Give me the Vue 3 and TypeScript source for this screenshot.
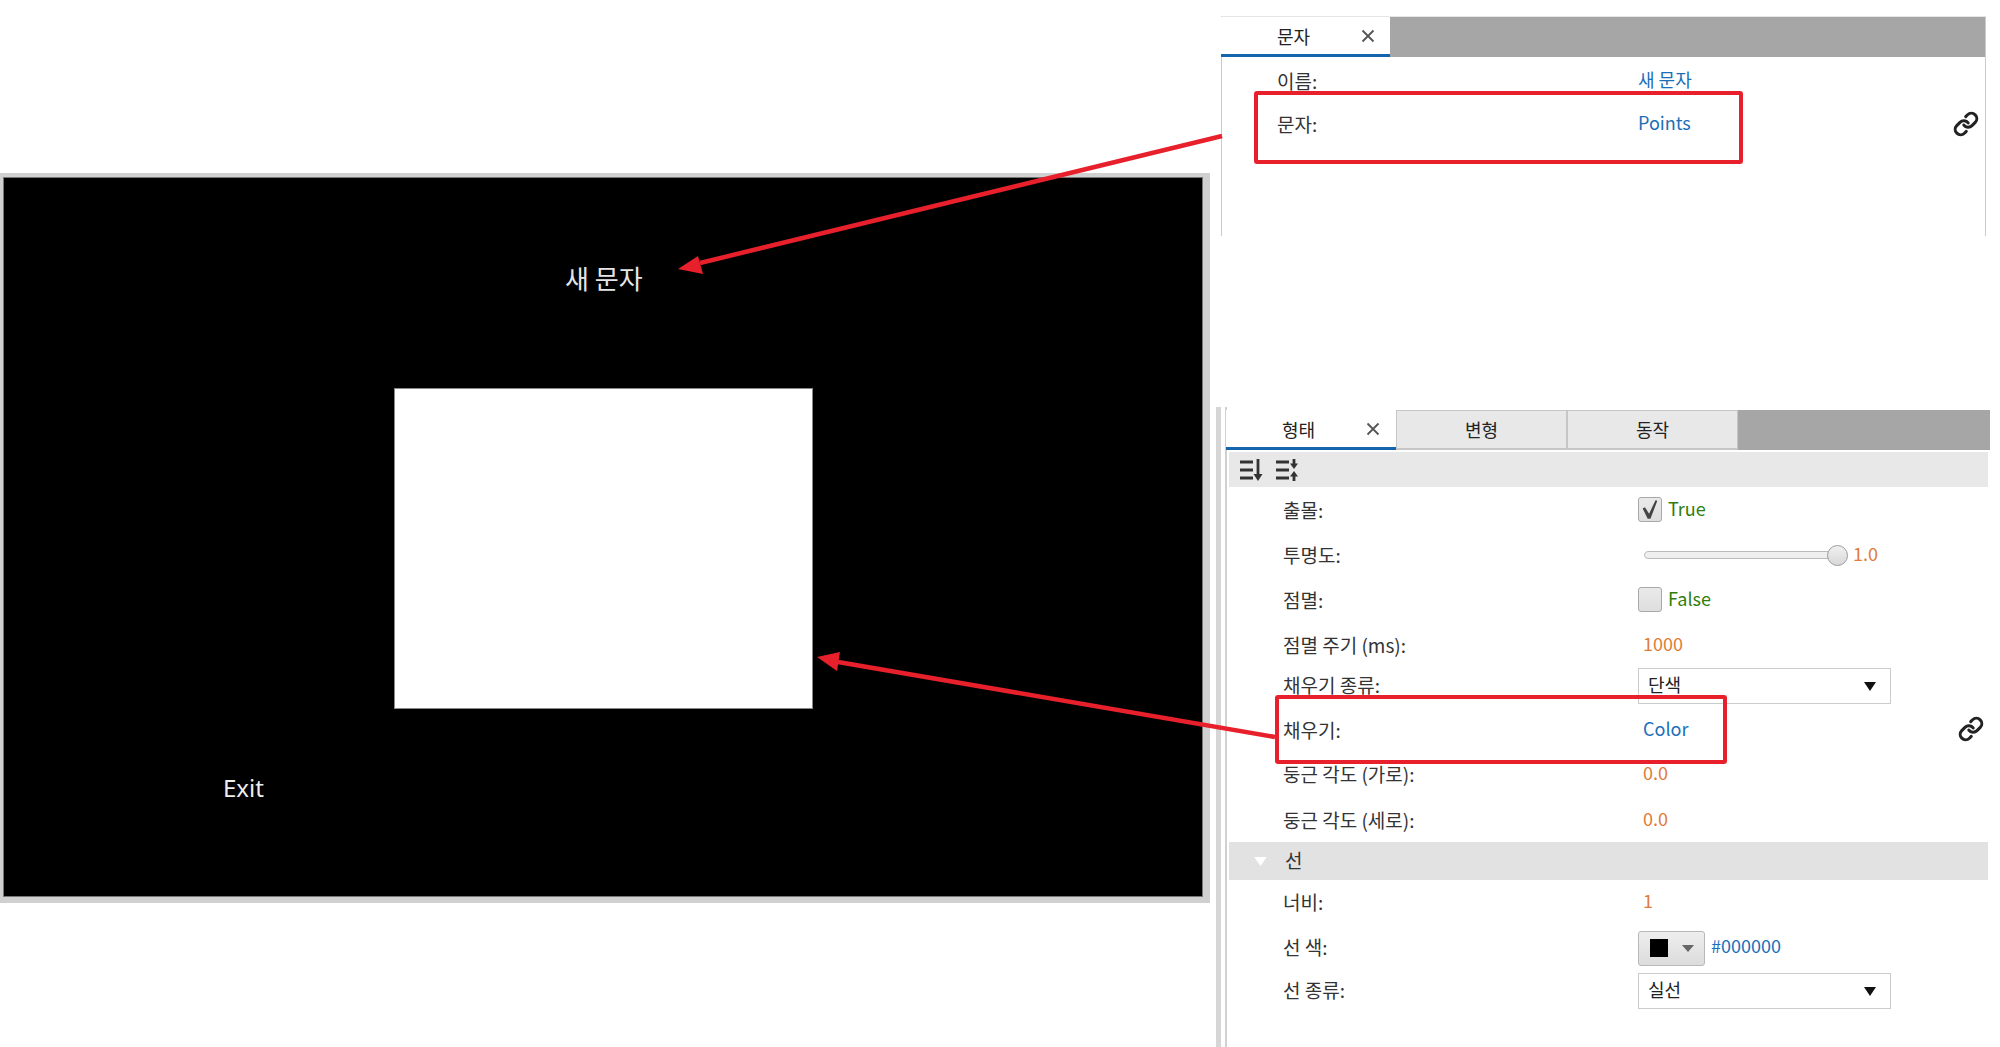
<script setup lang="ts">
interface Row {
  label: string
  kind: 'check' | 'slider' | 'number' | 'select' | 'link' | 'color'
  value?: string
  on?: boolean
  chain?: boolean
  gap: number
}

const shapeTabs = ['변형', '동작']

const shapeRows: Row[] = [
  { label: '출몰:', kind: 'check', value: 'True', on: true, gap: 6 },
  { label: '투명도:', kind: 'slider', value: '1.0', gap: 9 },
  { label: '점멸:', kind: 'check', value: 'False', on: false, gap: 9 },
  { label: '점멸 주기 (ms):', kind: 'number', value: '1000', gap: 9 },
  { label: '채우기 종류:', kind: 'select', value: '단색', gap: 4 },
  { label: '채우기:', kind: 'link', value: 'Color', chain: true, gap: 9 },
  { label: '둥근 각도 (가로):', kind: 'number', value: '0.0', gap: 8 },
  { label: '둥근 각도 (세로):', kind: 'number', value: '0.0', gap: 10 },
]

const lineRows: Row[] = [
  { label: '너비:', kind: 'number', value: '1', gap: 5 },
  { label: '선 색:', kind: 'color', value: '#000000', gap: 9 },
  { label: '선 종류:', kind: 'select', value: '실선', gap: 7 },
]

function rowGap(row: Row) {
  return { marginTop: row.gap + 'px' }
}
</script>

<template>
  <div class="page">
    <div class="left">
      <div class="frame">
        <div class="stage">
          <span class="stage-title">새 문자</span>
          <div class="stage-rect"></div>
          <span class="stage-exit">Exit</span>
        </div>
      </div>
    </div>

    <div class="right">
      <section class="text-panel">
        <div class="tabs">
          <div class="tab active">
            <span>문자</span>
            <svg class="close" viewBox="0 0 14 14"><path d="M1.5 1.5l11 11M12.5 1.5l-11 11" /></svg>
          </div>
        </div>
        <div class="row text-row first">
          <span class="label">이름:</span>
          <span class="link">새 문자</span>
        </div>
        <div class="row text-row second">
          <span class="label">문자:</span>
          <span class="link">Points</span>
          <svg class="chain" viewBox="0 0 24 24">
            <path d="M10 13a5 5 0 0 0 7.54.54l3-3a5 5 0 0 0-7.07-7.07l-1.72 1.71" />
            <path d="M14 11a5 5 0 0 0-7.54-.54l-3 3a5 5 0 0 0 7.07 7.07l1.71-1.71" />
          </svg>
        </div>
      </section>

      <section class="shape-panel">
        <div class="shape-inner">
          <div class="tabs">
            <div class="tab active">
              <span>형태</span>
              <svg class="close" viewBox="0 0 14 14"><path d="M1.5 1.5l11 11M12.5 1.5l-11 11" /></svg>
            </div>
            <div v-for="tab in shapeTabs" :key="tab" class="tab idle">{{ tab }}</div>
          </div>

          <div class="toolbar">
            <svg class="sort" viewBox="0 0 24 24">
              <path d="M1 4h13M1 12h13M1 20h13" class="sort-line" />
              <path d="M19 1v17" class="sort-line" />
              <path d="M14.5 16h9L19 23z" class="sort-fill" />
            </svg>
            <svg class="sort" viewBox="0 0 24 24">
              <path d="M1 4h13M1 12h13M1 20h13" class="sort-line" />
              <path d="M19 1v6M19 17v6" class="sort-line" />
              <path d="M15 5.5h8L19 11zM15 18.5h8L19 13z" class="sort-fill" />
            </svg>
          </div>

          <template v-for="group in [shapeRows, lineRows]" :key="group[0].label">
            <div v-if="group === lineRows" class="section">
              <svg class="fold" viewBox="0 0 14 10"><path d="M0 0h14L7 10z" /></svg>
              <span class="label">선</span>
            </div>
            <div v-for="row in group" :key="row.label" class="row shape-row" :style="rowGap(row)">
              <span class="label">{{ row.label }}</span>
              <template v-if="row.kind === 'check'">
                <span class="check">
                  <svg v-if="row.on" viewBox="0 0 24 24"><path d="M4 11l2.500-1.500 4.500 7L18 2l2 .5-7.500 19.500h-3z" /></svg>
                </span>
                <span class="bool">{{ row.value }}</span>
              </template>
              <template v-else-if="row.kind === 'slider'">
                <span class="slider"><i class="thumb"></i></span>
                <span class="number">{{ row.value }}</span>
              </template>
              <span v-else-if="row.kind === 'number'" class="number inset">{{ row.value }}</span>
              <span v-else-if="row.kind === 'select'" class="select">
                <span>{{ row.value }}</span>
                <i class="caret"></i>
              </span>
              <span v-else-if="row.kind === 'link'" class="link inset">{{ row.value }}</span>
              <template v-else>
                <span class="swatch-btn"><i class="swatch"></i><i class="swatch-caret"></i></span>
                <span class="link hex">{{ row.value }}</span>
              </template>
              <svg v-if="row.chain" class="chain" viewBox="0 0 24 24">
                <path d="M10 13a5 5 0 0 0 7.54.54l3-3a5 5 0 0 0-7.07-7.07l-1.72 1.71" />
                <path d="M14 11a5 5 0 0 0-7.54-.54l-3 3a5 5 0 0 0 7.07 7.07l1.71-1.71" />
              </svg>
            </div>
          </template>
        </div>
      </section>
    </div>

    <!-- callouts drawn on top of the screenshot -->
    <svg class="callouts" viewBox="0 0 2000 1047">
      <rect x="1256" y="93" width="485" height="69" rx="1" />
      <rect x="1277" y="697" width="448" height="65" rx="1" />
      <path d="M1222 136L700 263" />
      <path d="M1275 737L838 662" />
      <polygon points="678,269 698,256 703,274" />
      <polygon points="817,657 840,652 837,671" />
    </svg>
  </div>
</template>

<style>
html, body {
  margin: 0;
  background: #fff;
}
</style>

<style scoped>
.page {
  position: relative;
  width: 2000px;
  height: 1047px;
  overflow: hidden;
  display: flex;
  background: #fff;
  font-family: "Noto Sans CJK KR", "Noto Sans", sans-serif;
  font-size: 18px;
  color: #333;
}

.left {
  width: 1210px;
  padding-top: 173px;
  flex-shrink: 0;
}

.frame {
  box-sizing: border-box;
  width: 1210px;
  height: 730px;
  padding: 4px 7px 6px 3px;
  background: #d0d0d0;
}

.stage {
  position: relative;
  box-sizing: border-box;
  width: 100%;
  height: 100%;
  background: #000;
  border: 1px solid #777;
}

.stage-title {
  position: absolute;
  left: 561px;
  top: 82px;
  font-size: 26px;
  line-height: 36px;
  color: #e6e6e6;
}

.stage-exit {
  position: absolute;
  left: 219px;
  top: 592px;
  font-family: "Noto Sans", sans-serif;
  font-size: 24px;
  line-height: 36px;
  color: #eee;
}

.stage-rect {
  position: absolute;
  left: 390px;
  top: 210px;
  box-sizing: border-box;
  width: 419px;
  height: 321px;
  background: #fff;
  border: 1px solid #888;
}

.right {
  flex: 1;
  padding-top: 16px;
  display: flex;
  flex-direction: column;
}

.text-panel {
  box-sizing: border-box;
  margin-left: 11px;
  width: 765px;
  height: 220px;
  border-top: 1px solid #e6e6e6;
  border-left: 1px solid #ccc;
  border-right: 1px solid #ccc;
}

.shape-panel {
  box-sizing: border-box;
  margin-top: 171px;
  margin-left: 6px;
  width: 774px;
  height: 640px;
  padding-left: 4px;
  border-left: 5px solid #d6d6d6;
}

.shape-inner {
  box-sizing: border-box;
  height: 100%;
  padding-top: 3px;
  border-left: 2px solid #d0d0d0;
}

.tabs {
  display: flex;
  height: 40px;
  margin-left: -1px;
  background: #a6a6a6;
}

.tab {
  box-sizing: border-box;
  height: 100%;
  display: flex;
  align-items: center;
}

.tab > span,
.idle {
  line-height: 34px;
}

.active {
  width: 169px;
  padding-left: 56px;
  background: #fff;
  border-bottom: 3px solid #1565ae;
  color: #222;
}

.shape-panel .active {
  width: 170px;
}

.idle {
  width: 171px;
  justify-content: center;
  padding-bottom: 2px;
  background: #e8e8e8;
  border: 1px solid #c6c6c6;
  border-bottom-width: 2px;
  color: #222;
}

.close {
  width: 14px;
  height: 14px;
  margin-left: 51px;
  fill: none;
  stroke: #555;
  stroke-width: 1.8;
}

.toolbar {
  display: flex;
  align-items: center;
  gap: 12px;
  height: 35px;
  margin: 2px 2px 0 2px;
  padding-left: 10px;
  background: #e8e8e8;
}

.sort {
  width: 24px;
  height: 24px;
}

.sort-line {
  fill: none;
  stroke: #333;
  stroke-width: 2.8;
}

.sort-fill {
  fill: #333;
}

.row {
  display: flex;
  align-items: center;
  height: 36px;
  white-space: nowrap;
}

.text-row {
  padding: 0 6px 0 55px;
}

.text-row .label {
  width: 361px;
}

.first {
  margin-top: 6px;
}

.second {
  margin-top: 7px;
}

.shape-row {
  padding: 0 6px 0 56px;
}

.shape-row .label {
  width: 355px;
  flex-shrink: 0;
  margin-bottom: 4px;
}

.label {
  font-size: 19px;
  color: #333;
  margin-bottom: 2px;
}

.section .label {
  margin-bottom: 4px;
}

.link {
  color: #1b6fb8;
  margin-bottom: 4px;
}

.number {
  color: #e07b39;
  margin-bottom: 7px;
}

.shape-row .link {
  margin-bottom: 7px;
}

.inset {
  margin-left: 5px;
}

.bool {
  margin-left: 6px;
  margin-bottom: 6px;
  color: #2f7d0b;
}

.hex {
  margin-left: 6px;
}

.chain {
  width: 26px;
  height: 26px;
  margin-left: auto;
  fill: none;
  stroke: #222;
  stroke-width: 2.8;
  stroke-linecap: round;
  stroke-linejoin: round;
}

.shape-row .chain {
  margin-bottom: 4px;
}

.check {
  box-sizing: border-box;
  width: 24px;
  height: 25px;
  margin-bottom: 4px;
  display: flex;
  align-items: center;
  justify-content: center;
  border: 1px solid #a8a8a8;
  border-radius: 3px;
  background: linear-gradient(#eaeaea, #dedede);
}

.check svg {
  width: 23px;
  height: 23px;
  fill: #444;
}

.slider {
  position: relative;
  box-sizing: border-box;
  margin-left: 6px;
  margin-bottom: 2px;
  width: 202px;
  height: 8px;
  border: 1px solid #bcbcbc;
  border-radius: 4px;
  background: #efefef;
  flex-shrink: 0;
}

.thumb {
  position: absolute;
  right: -3px;
  top: -7px;
  box-sizing: border-box;
  width: 21px;
  height: 21px;
  border: 1.5px solid #9a9a9a;
  border-radius: 50%;
  background: linear-gradient(#f0f0f0, #d8d8d8);
}

.slider + .number {
  margin-left: 7px;
}

.select {
  box-sizing: border-box;
  width: 253px;
  height: 36px;
  display: flex;
  align-items: center;
  justify-content: space-between;
  padding: 0 14px 0 9px;
  border: 1px solid #ccc;
  background: #fff;
  color: #222;
}

.select > span {
  margin-bottom: 4px;
}

.caret {
  width: 0;
  height: 0;
  border-left: 6px solid transparent;
  border-right: 6px solid transparent;
  border-top: 9px solid #111;
}

.swatch-btn {
  box-sizing: border-box;
  width: 67px;
  height: 35px;
  display: flex;
  align-items: center;
  padding-left: 11px;
  border: 1px solid #b8b8b8;
  border-radius: 3px;
  background: linear-gradient(#eee, #dcdcdc);
}

.swatch {
  width: 18px;
  height: 18px;
  background: #000;
}

.swatch-caret {
  width: 0;
  height: 0;
  margin-left: 14px;
  border-left: 6px solid transparent;
  border-right: 6px solid transparent;
  border-top: 7px solid #666;
}

.section {
  display: flex;
  align-items: center;
  height: 38px;
  margin: 3px 2px 0 2px;
  padding-left: 25px;
  background: #e2e2e2;
}

.fold {
  width: 13px;
  height: 9px;
  margin-right: 18px;
  fill: #fff;
}

.callouts {
  position: absolute;
  left: 0;
  top: 0;
  width: 2000px;
  height: 1047px;
  pointer-events: none;
}

.callouts rect {
  fill: none;
  stroke: #e8202c;
  stroke-width: 4;
}

.callouts path {
  fill: none;
  stroke: #e8202c;
  stroke-width: 4.500;
}

.callouts polygon {
  fill: #e8202c;
}
</style>
